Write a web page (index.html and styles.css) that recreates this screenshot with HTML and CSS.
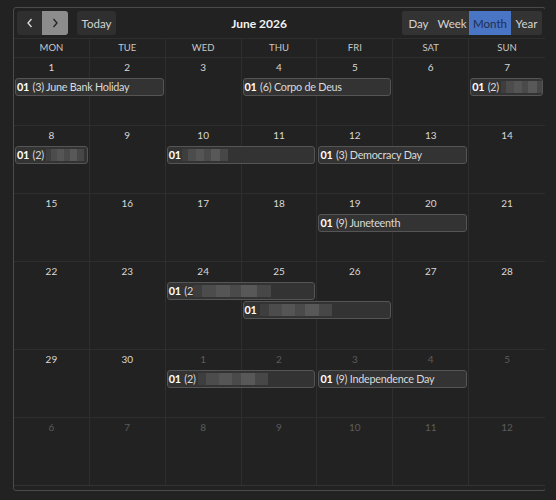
FILE: index.html
```html
<!DOCTYPE html>
<html lang="en">
<head>
  <meta charset="UTF-8" />
  <title>Calendar</title>
  <link rel="stylesheet" href="styles.css">
</head>
<body>
  <div class="calendar">
    <div class="toolbar">
      <div class="left">
        <div class="btn-group">
          <button class="btn arrow">
            <svg width="8" height="10" viewBox="0 0 8 10"><path d="M5.5 1 L2 5 L5.5 9" fill="none" stroke="#ddd" stroke-width="1.3"/></svg>
          </button>
          <button class="btn arrow active">
            <svg width="8" height="10" viewBox="0 0 8 10"><path d="M2.5 1 L6 5 L2.5 9" fill="none" stroke="#222" stroke-width="1.3"/></svg>
          </button>
        </div>
        <button class="btn today">Today</button>
      </div>
      <h2 class="title">June 2026</h2>
      <div class="btn-group views">
        <button class="btn">Day</button>
        <button class="btn">Week</button>
        <button class="btn selected">Month</button>
        <button class="btn">Year</button>
      </div>
    </div>

    <div class="day-names">
      <div>MON</div><div>TUE</div><div>WED</div><div>THU</div><div>FRI</div><div>SAT</div><div>SUN</div>
    </div>

    <div class="week">
      <div class="cell c1">1</div><div class="cell c2">2</div><div class="cell c3">3</div><div class="cell c4">4</div>
      <div class="cell c5">5</div><div class="cell c6">6</div><div class="cell c7">7</div>
      <div class="event r1 s1 span2"><b>01</b> (3) June Bank Holiday</div>
      <div class="event r1 s4 span2"><b>01</b> (6) Corpo de Deus</div>
      <div class="event r1 s7 span1"><b>01</b> (2) <span class="smudge w44"></span></div>
    </div>

    <div class="week">
      <div class="cell c1">8</div><div class="cell c2">9</div><div class="cell c3">10</div><div class="cell c4">11</div>
      <div class="cell c5">12</div><div class="cell c6">13</div><div class="cell c7">14</div>
      <div class="event r1 s1 span1"><b>01</b> (2) <span class="smudge w38"></span></div>
      <div class="event r1 s3 span2"><b>01</b><span class="smudge w46"></span></div>
      <div class="event r1 s5 span2"><b>01</b> (3) Democracy Day</div>
    </div>

    <div class="week">
      <div class="cell c1">15</div><div class="cell c2">16</div><div class="cell c3">17</div><div class="cell c4">18</div>
      <div class="cell c5">19</div><div class="cell c6">20</div><div class="cell c7">21</div>
      <div class="event r1 s5 span2"><b>01</b> (9) Juneteenth</div>
    </div>

    <div class="week tall">
      <div class="cell c1">22</div><div class="cell c2">23</div><div class="cell c3">24</div><div class="cell c4">25</div>
      <div class="cell c5">26</div><div class="cell c6">27</div><div class="cell c7">28</div>
      <div class="event r1 s3 span2"><b>01</b> (2<span class="smudge w78"></span></div>
      <div class="event r2 s4 span2"><b>01</b> <span class="smudge w72"></span></div>
    </div>

    <div class="week">
      <div class="cell c1">29</div><div class="cell c2">30</div><div class="cell c3 muted">1</div><div class="cell c4 muted">2</div>
      <div class="cell c5 muted">3</div><div class="cell c6 muted">4</div><div class="cell c7 muted">5</div>
      <div class="event r1 s3 span2"><b>01</b> (2) <span class="smudge w70"></span></div>
      <div class="event r1 s5 span2"><b>01</b> (9) Independence Day</div>
    </div>

    <div class="week last">
      <div class="cell c1 muted">6</div><div class="cell c2 muted">7</div><div class="cell c3 muted">8</div><div class="cell c4 muted">9</div>
      <div class="cell c5 muted">10</div><div class="cell c6 muted">11</div><div class="cell c7 muted">12</div>
    </div>
  </div>
</body>
</html>
```

FILE: styles.css
```css
:root {
  --bg: #222222;
  --line: #2e2e2e;
  --frame: #4a4a4a;
  --btn: #2f2f2f;
  --text: #d4d4d4;
  --blue: #4a74c4;
}
body {
  margin: 7px 11px 0 13px;
  background: var(--bg);
  font-family: 'Lato', 'Noto Sans', sans-serif;
  color: var(--text);
}
.calendar {
  width: 531px;
  border: 1px solid var(--frame);
  border-radius: 3px;
  padding-bottom: 4px;
  background: var(--bg);
}
.toolbar {
  display: flex;
  justify-content: space-between;
  align-items: center;
  padding: 3px;
}
.left {
  display: flex;
  gap: 9px;
}
.title {
  margin: 0;
  font-size: 12px;
  font-weight: 700;
  color: #f2f2f2;
}
.btn-group {
  display: flex;
  background: var(--btn);
  border-radius: 3px;
}
.btn {
  height: 24px;
  border: none;
  background: var(--btn);
  color: var(--text);
  font-family: inherit;
  font-size: 11.5px;
  padding: 0;
  border-radius: 3px;
  cursor: pointer;
}
.btn-group .btn {
  border-radius: 0;
}
.btn.arrow {
  width: 25px;
  display: flex;
  align-items: center;
  justify-content: center;
}
.btn.arrow:first-child {
  border-radius: 3px 0 0 3px;
}
.btn.arrow.active {
  width: 26px;
  background: #8c8c8c;
  border-radius: 0 3px 3px 0;
}
.btn.today {
  width: 39px;
}
.views .btn:nth-child(1) { width: 33px; }
.views .btn:nth-child(2) { width: 34px; }
.views .btn:nth-child(3) { width: 42px; }
.views .btn:nth-child(4) { width: 31px; }
.views {
  background: #333;
}
.views .btn { background: #333; }
.views .btn:first-child { border-radius: 3px 0 0 3px; }
.views .btn:last-child { border-radius: 0 3px 3px 0; }
.btn.selected {
  background: var(--blue);
  color: #1d2f52;
}
.day-names {
  display: grid;
  grid-template-columns: repeat(7, 1fr);
  border-top: 1px solid var(--line);
  border-bottom: 1px solid var(--line);
}
.day-names div {
  height: 18px;
  line-height: 18px;
  text-align: center;
  font-size: 9.5px;
  color: #c8c8c8;
  border-right: 1px solid var(--line);
}
.day-names div:last-child,
.cell.c7 {
  border-right: none;
}
.week {
  display: grid;
  grid-template-columns: repeat(7, 1fr);
  grid-template-rows: 20px 19px 1fr;
  height: 67px;
  border-bottom: 1px solid var(--line);
}
.week.tall {
  grid-template-rows: 20px 19px 19px 1fr;
  height: 87px;
}
.week.last {
  grid-template-rows: 20px 1fr;
  border-bottom-color: #333;
}
.cell {
  grid-row: 1 / -1;
  border-right: 1px solid var(--line);
  text-align: center;
  font-size: 10px;
  padding-top: 3px;
  color: #d8d8d8;
}
.cell.muted { color: #5c5c5c; }
.c1 { grid-column: 1; }
.c2 { grid-column: 2; }
.c3 { grid-column: 3; }
.c4 { grid-column: 4; }
.c5 { grid-column: 5; }
.c6 { grid-column: 6; }
.c7 { grid-column: 7; }

.event {
  box-sizing: border-box;
  height: 18px;
  margin: 0 2px 0 1px;
  padding: 0 1px;
  background: #333;
  border: 1px solid #555;
  border-radius: 3px;
  font-size: 10.8px;
  letter-spacing: -0.25px;
  line-height: 16px;
  color: #dadada;
  white-space: nowrap;
  overflow: hidden;
}
.event b {
  color: #fff;
  margin-right: 1px;
}
.r1 { grid-row: 2; }
.r2 { grid-row: 3; }
.s1 { grid-column-start: 1; }
.s3 { grid-column-start: 3; }
.s4 { grid-column-start: 4; }
.s5 { grid-column-start: 5; }
.s7 { grid-column-start: 7; }
.span1 { grid-column-end: span 1; }
.span2 { grid-column-end: span 2; }

.smudge {
  display: inline-block;
  height: 12px;
  vertical-align: -2px;
  background: linear-gradient(90deg, #3e3e3e 0 12%, #4c4c4c 12% 30%, #555 30% 48%, #4a4a4a 48% 62%, #585858 62% 82%, #474747 82% 100%);
}
.w38 { width: 38px; }
.w44 { width: 44px; }
.w46 { width: 46px; }
.w70 { width: 70px; }
.w72 { width: 72px; }
.w78 { width: 78px; }
```
